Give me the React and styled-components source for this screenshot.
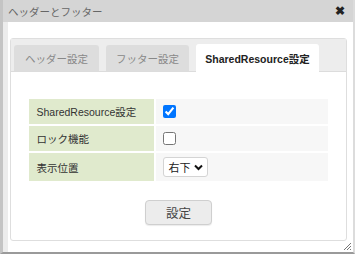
import { useState } from "react";
import styled, { createGlobalStyle } from "styled-components";

const Global = createGlobalStyle`
  html, body { margin: 0; padding: 0; background: #fff; }
  body { font-family: "Liberation Sans", "Noto Sans CJK JP", sans-serif; }
`;

const Window = styled.div`
  width: 355px;
  height: 254px;
  box-sizing: border-box;
  display: flex;
  flex-direction: column;
  border-left: 3px solid #c4c4c4;
  border-right: 2px solid #dcdcdc;
  border-bottom: 2px solid #9a9a9a;
  background: #fff;
  position: relative;
`;

const TitleBar = styled.div`
  height: 22px;
  flex: none;
  display: flex;
  align-items: center;
  justify-content: space-between;
  padding: 0 8px 0 5px;
  background: #d5d5d5;
  color: #666;
  font-size: 10.5px;
`;

const Close = styled.span`
  font-size: 12px;
  color: #222;
  font-weight: bold;
`;

const Body = styled.div`
  flex: 1;
  display: flex;
  border-left: 5px solid #ececec;
  padding: 16px 6px 11px 2px;
`;

const Panel = styled.div`
  flex: 1;
  border: 1px solid #dedede;
  border-radius: 3px;
  display: flex;
  flex-direction: column;
`;

const TabBar = styled.div`
  display: flex;
  gap: 7px;
  padding: 6px 3px 0;
  background: #ededed;
  border-bottom: 1px solid #dcdcdc;
  height: 33px;
  box-sizing: border-box;
  align-items: flex-end;
`;

const Tab = styled.div`
  height: ${(p) => (p.$active ? 28 : 26)}px;
  margin-bottom: ${(p) => (p.$active ? -1 : 0)}px;
  width: ${(p) => p.$w}px;
  box-sizing: border-box;
  display: flex;
  align-items: center;
  justify-content: center;
  white-space: nowrap;
  background: ${(p) => (p.$active ? "#fff" : "#dddddd")};
  color: ${(p) => (p.$active ? "#222" : "#888")};
  font-size: 10.5px;
  border-radius: 3px 3px 0 0;
  ${(p) => (p.$active ? "font-weight: bold;" : "")}
`;

const Content = styled.div`
  flex: 1;
  display: flex;
  flex-direction: column;
  align-items: center;
  padding-top: 25px;
`;

const Table = styled.table`
  width: 303px;
  border-spacing: 2px;
  margin-left: -1px;
`;

const Label = styled.td`
  width: 117px;
  padding: 0 0 0 8px;
  background: #e0eacd;
  color: #333;
  font-size: 10.5px;
`;

const Value = styled.td`
  background: #f7f7f7;
  padding: 0 0 0 7px;
  height: ${(p) => p.$h || 25}px;
`;

const Check = styled.input`
  width: 13px;
  height: 13px;
  margin: 0;
  accent-color: #0075ff;
  display: block;
`;

const Select = styled.div`
  display: inline-flex;
  align-items: center;
  gap: 3px;
  height: 20px;
  box-sizing: border-box;
  padding: 0 4px 0 5px;
  border: 1px solid #d4d4d4;
  border-radius: 3px;
  background: #fff;
  font-size: 11px;
  color: #222;
  vertical-align: middle;
`;

const Button = styled.button`
  margin-top: 17px;
  width: 67px;
  height: 25px;
  border: 1px solid #cfcfcf;
  border-radius: 4px;
  background: #ececec;
  color: #444;
  font-size: 12.5px;
  font-family: inherit;
  box-shadow: 0 1px 1px rgba(0, 0, 0, 0.08);
`;

const Grip = styled.svg`
  position: absolute;
  right: 1px;
  bottom: 1px;
`;

export default function App() {
  const [shared, setShared] = useState(true);
  const [lock, setLock] = useState(false);
  return (
    <>
      <Global />
      <Window>
        <TitleBar>
          <span>ヘッダーとフッター</span>
          <Close>✖</Close>
        </TitleBar>
        <Body>
          <Panel>
            <TabBar>
              <Tab $w={85}>ヘッダー設定</Tab>
              <Tab $w={83}>フッター設定</Tab>
              <Tab $w={123} $active>
                SharedResource設定
              </Tab>
            </TabBar>
            <Content>
              <Table>
                <tbody>
                  <tr>
                    <Label>SharedResource設定</Label>
                    <Value>
                      <Check
                        type="checkbox"
                        checked={shared}
                        onChange={(e) => setShared(e.target.checked)}
                      />
                    </Value>
                  </tr>
                  <tr>
                    <Label>ロック機能</Label>
                    <Value>
                      <Check
                        type="checkbox"
                        checked={lock}
                        onChange={(e) => setLock(e.target.checked)}
                      />
                    </Value>
                  </tr>
                  <tr>
                    <Label>表示位置</Label>
                    <Value $h={28}>
                      <Select>
                        右下
                        <svg width="9" height="7" viewBox="0 0 9 7">
                          <path d="M1 1.5 L4.5 5 L8 1.5" stroke="#111" strokeWidth="2" fill="none" />
                        </svg>
                      </Select>
                    </Value>
                  </tr>
                </tbody>
              </Table>
              <Button>設定</Button>
            </Content>
          </Panel>
        </Body>
        <Grip width="10" height="10" viewBox="0 0 10 10">
          <path d="M9 2 L2 9 M9 5 L5 9 M9 8 L8 9" stroke="#777" strokeWidth="1" />
        </Grip>
      </Window>
    </>
  );
}
